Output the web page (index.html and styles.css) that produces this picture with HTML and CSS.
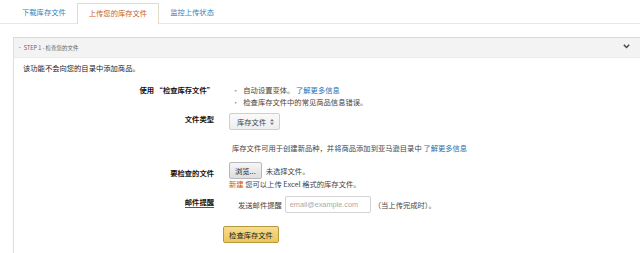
FILE: index.html
```html
<!DOCTYPE html>
<html lang="zh-CN">
<head>
<meta charset="utf-8">
<title>上传您的库存文件</title>
<link rel="stylesheet" href="styles.css">
</head>
<body>
<div class="tabs">
  <a class="tab">下载库存文件</a>
  <a class="tab active">上传您的库存文件</a>
  <a class="tab">监控上传状态</a>
</div>
<div class="panel">
  <div class="panel-head">
    <span class="step"><span class="dot">•</span> STEP 1 - 检查您的文件</span>
    <svg class="chev" width="7" height="5" viewBox="0 0 7 5"><polyline points="0.8,0.8 3.5,3.6 6.2,0.8" fill="none" stroke="#444" stroke-width="1.4"/></svg>
  </div>
  <div class="panel-body">
    <p class="intro">该功能不会向您的目录中添加商品。</p>
    <div class="form">
      <div class="label l-top">使用 “检查库存文件”</div>
      <ul class="bullets">
        <li>自动设置变体。 <a class="link">了解更多信息</a></li>
        <li>检查库存文件中的常见商品信息错误。</li>
      </ul>

      <div class="label l-center">文件类型</div>
      <div class="value v-select">
        <span class="select">库存文件
          <svg width="4" height="6" viewBox="0 0 4 6"><polygon points="2,0 4,2.2 0,2.2" fill="#777"/><polygon points="0,3.8 4,3.8 2,6" fill="#777"/></svg>
        </span>
      </div>

      <div class="label"></div>
      <div class="value note">库存文件可用于创建新品种，并将商品添加到亚马逊目录中 <a class="link">了解更多信息</a></div>

      <div class="label l-file">要检查的文件</div>
      <div class="value v-file">
        <div class="file-line"><span class="browse">浏览...</span><span class="nofile">未选择文件。</span></div>
        <div class="hint"><span class="new">新建</span> 您可以上传 Excel 格式的库存文件。</div>
      </div>

      <div class="label l-center"><span class="underlined">邮件提醒</span></div>
      <div class="value v-mail">
        <span>发送邮件提醒</span>
        <span class="input">email@example.com</span>
        <span>（当上传完成时）。</span>
      </div>
    </div>
    <div class="actions"><span class="submit">检查库存文件</span></div>
  </div>
</div>
</body>
</html>
```
FILE: styles.css
```css
html, body {
  margin: 0;
  padding: 0;
  background: #fff;
}
body {
  font-family: "Noto Sans CJK SC", "Liberation Sans", sans-serif;
  font-size: 7.3px;
  color: #333;
  width: 640px;
  height: 253px;
  overflow: hidden;
}
.tabs {
  display: flex;
  align-items: flex-end;
  height: 24px;
  padding-left: 11px;
  border-bottom: 1px solid #e6e6e6;
  box-sizing: border-box;
}
.tab {
  display: flex;
  align-items: center;
  height: 18px;
  padding: 0 11px 1px;
  color: #3d7fb8;
  line-height: 1;
}
.tab.active {
  color: #c8641c;
  background: #fff;
  border: 1px solid #e2dccc;
  border-bottom: none;
  height: 19px;
  margin-bottom: -1px;
  padding: 0 11px 1px;
}
.panel {
  margin: 13px 0 0 13px;
  border-left: 1px solid #dedede;
  border-top: 1px solid #d8d8d8;
  height: 216px;
}
.panel-head {
  display: flex;
  align-items: center;
  justify-content: space-between;
  height: 19px;
  background: #f3f3f3;
  padding: 0 10px 0 3px;
  border-bottom: 1px solid #ececec;
}
.step {
  font-size: 5.5px;
  color: #666;
}
.dot {
  color: #888;
}
.chev {
  display: block;
  margin-top: -2px;
}
.panel-body {
  padding-left: 9px;
}
.intro {
  margin: 4px 0 0;
  line-height: 12px;
  color: #222;
}
.form {
  display: grid;
  grid-template-columns: 191px 1fr;
  column-gap: 15px;
  margin-top: 10px;
}
.label {
  text-align: right;
  font-weight: bold;
  color: #111;
}
.l-top { line-height: 12px; }
.l-center { align-self: center; }
.l-file { align-self: center; padding-top: 2px; }
.underlined {
  border-bottom: 1px solid #555;
}
.bullets {
  margin: 0;
  padding: 0 0 0 3px;
  list-style: none;
  line-height: 12px;
  color: #444;
}
.bullets li::before {
  content: "•";
  color: #888;
  margin-right: 4px;
}
.link {
  color: #2a6fb0;
}
.v-select {
  padding-top: 5px;
}
.select {
  display: inline-flex;
  align-items: center;
  gap: 4px;
  height: 15px;
  padding: 0 5px 0 7px;
  border: 1px solid #cfcfcf;
  border-radius: 2px;
  background: linear-gradient(#fafafa, #eeeeee);
  color: #444;
}
.note {
  padding: 12px 0 0 3px;
  line-height: 12px;
  color: #444;
}
.v-file {
  padding-top: 8px;
}
.file-line {
  display: flex;
  align-items: center;
  gap: 4px;
  color: #444;
}
.browse {
  display: inline-flex;
  align-items: center;
  height: 15px;
  padding: 0 5px;
  border: 1px solid #b9b9b9;
  border-radius: 2px;
  background: linear-gradient(#f6f6f6, #dedede);
  color: #222;
}
.hint {
  line-height: 11px;
  color: #444;
}
.new {
  color: #c45500;
}
.v-mail {
  display: flex;
  align-items: center;
  gap: 3px;
  padding: 6px 0 0 9px;
  color: #444;
}
.input {
  display: inline-flex;
  align-items: center;
  width: 80px;
  height: 15px;
  padding-left: 4px;
  border: 1px solid #d4d4d4;
  border-radius: 2px;
  color: #aaa;
  font-family: "Liberation Sans", sans-serif;
  font-size: 7.3px;
}
.actions {
  padding: 13px 0 0 200px;
}
.submit {
  display: inline-flex;
  align-items: center;
  justify-content: center;
  width: 54px;
  height: 15px;
  border: 1px solid #b8983f;
  border-radius: 2px;
  background: linear-gradient(#f6dc8e, #ecc65a);
  color: #222;
}
```
